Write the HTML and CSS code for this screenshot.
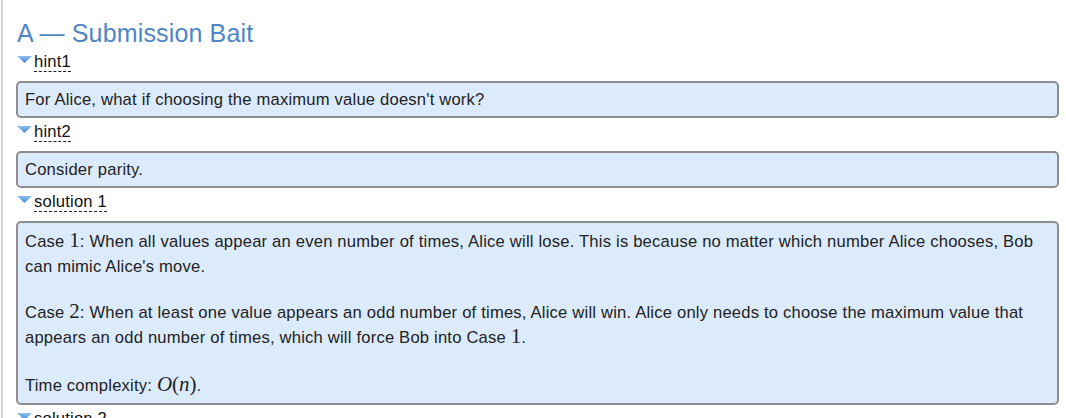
FILE: index.html
```html
<!DOCTYPE html>
<html>
<head>
<meta charset="utf-8">
<link rel="stylesheet" href="styles.css">
</head>
<body>
<div class="page">
  <h3 class="title">A — Submission Bait</h3>

  <div class="spoiler">
    <div class="spoiler-head"><svg class="tri" width="15" height="8" viewBox="0 0 15 8"><defs><linearGradient id="g1" x1="0" y1="0" x2="0" y2="1"><stop offset="0" stop-color="#8fc0ee"/><stop offset="1" stop-color="#3d87d6"/></linearGradient></defs><polygon points="0,0 15,0 7.5,7" fill="url(#g1)"/></svg><span class="label">hint1</span></div>
    <div class="box">For Alice, what if choosing the maximum value doesn't work?</div>
  </div>

  <div class="spoiler">
    <div class="spoiler-head"><svg class="tri" width="15" height="8" viewBox="0 0 15 8"><polygon points="0,0 15,0 7.5,7" fill="url(#g1)"/></svg><span class="label">hint2</span></div>
    <div class="box">Consider parity.</div>
  </div>

  <div class="spoiler">
    <div class="spoiler-head"><svg class="tri" width="15" height="8" viewBox="0 0 15 8"><polygon points="0,0 15,0 7.5,7" fill="url(#g1)"/></svg><span class="label">solution 1</span></div>
    <div class="box box-long">
      <p class="p1">Case <span class="math">1</span>: When all values appear an even number of times, Alice will lose. This is because no matter which number Alice chooses, Bob can mimic Alice's move.</p>
      <p class="p2">Case <span class="math">2</span>: When at least one value appears an odd number of times, Alice will win. Alice only needs to choose the maximum value that appears an odd number of times, which will force Bob into Case <span class="math">1</span>.</p>
      <p class="p3">Time complexity: <span class="math"><i>O</i>(<i>n</i>)</span>.</p>
    </div>
  </div>

  <div class="spoiler">
    <div class="spoiler-head"><svg class="tri" width="15" height="8" viewBox="0 0 15 8"><polygon points="0,0 15,0 7.5,7" fill="url(#g1)"/></svg><span class="label">solution 2</span></div>
  </div>
</div>
</body>
</html>
```

FILE: styles.css
```css
html, body {
  margin: 0;
  padding: 0;
  background: #ffffff;
  overflow: hidden;
}

.page {
  margin-left: 1px;
  border-left: 2px solid #d4d4d4;
  padding: 18px 7px 0 13px;
  min-height: 418px;
  box-sizing: border-box;
  font-family: "Liberation Sans", Arial, sans-serif;
  font-size: 16.6px;
  letter-spacing: 0.2px;
  color: #222222;
}

.title {
  margin: 0 0 2px 1px;
  font-size: 25px;
  line-height: 30px;
  font-weight: normal;
  letter-spacing: 0.15px;
  color: #4f86c6;
}

.spoiler-head {
  display: flex;
  align-items: flex-start;
  margin: 4px 0 9px 0;
  line-height: 20px;
  height: 20px;
  color: #111111;
}

.tri {
  display: block;
  margin: 4px 2px 0 1px;
}

.label {
  line-height: 19px;
  border-bottom: 1px dashed #222222;
}

.box {
  background: #dcebfc;
  border: 2px solid #8e8e8e;
  border-radius: 5px;
  padding: 4.5px 7px;
  line-height: 24px;
}

.box-long {
  padding-top: 5.75px;
  padding-bottom: 4.25px;
  line-height: 25.5px;
}

.box-long p {
  margin: 0;
}

.box-long .p1 {
  margin-bottom: 20px;
}

.box-long .p2 {
  margin-bottom: 22px;
}

.math {
  font-family: "Liberation Serif", "Times New Roman", serif;
  font-size: 21px;
  letter-spacing: 0;
  line-height: 1;
}

.math i {
  font-style: italic;
}
```
